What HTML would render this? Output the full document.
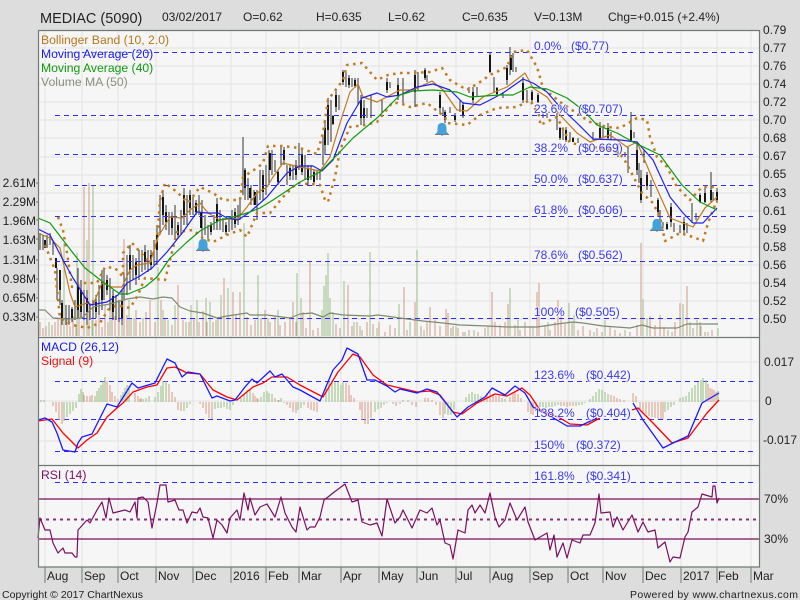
<!DOCTYPE html>
<html><head><meta charset="utf-8"><style>
html,body{margin:0;padding:0;background:#ddd;width:800px;height:600px;overflow:hidden}
svg{display:block}
text{font-family:"Liberation Sans",sans-serif;font-size:12px;fill:#222}
polyline{stroke-linejoin:round}
.f{fill:#3a3af0;stroke:#f6f6f6;stroke-width:2;stroke-opacity:.7;paint-order:stroke}
</style></head><body>
<svg width="800" height="600" viewBox="0 0 800 600" xmlns="http://www.w3.org/2000/svg">
<rect width="800" height="600" fill="#dddddd"/>
<rect x="38.5" y="30.5" width="721" height="536.5" fill="#f6f6f6"/>
<!-- grid -->
<path fill="none" stroke="#e6e6e6" stroke-width="1.3" d="M45 31V567M82 31V567M118 31V567M156 31V567M193 31V567M231 31V567M266 31V567M299 31V567M341 31V567M379 31V567M417 31V567M456 31V567M490 31V567M530 31V567M568 31V567M603 31V567M643 31V567M681 31V567M717 31V567M751 31V567"/>
<path fill="none" stroke="#e6e6e6" stroke-width="1.3" d="M39 48H759M39 66H759M39 84H759M39 102H759M39 120H759M39 138H759M39 157H759M39 175H759M39 193H759M39 211H759M39 229H759M39 247H759M39 265H759M39 283H759M39 301H759M39 319H759M39 362H759M39 401H759M39 441H759"/>
<!-- volume -->
<path fill="none" stroke="#cf9c88" stroke-width="1" d="M40 322V336M43 328V336M46 326V336M52 325V336M55 322V336M58 318V336M61 313V336M64 325V336M67 319V336M70 326V336M73 316V336M76 325V336M79 310V336M84 187V336M89 183V336M96 320V336M99 312V336M102 327V336M105 305V336M108 322V336M112 300V336M115 316V336M119 300V336M124 239V336M127 315V336M131 318V336M136 310V336M140 322V336M146 312V336M150 300V336M155 322V336M161 300V336M165 318V336M172 325V336M178 285V336M183 320V336M189 322V336M194 318V336M199 322V336M203 311V336M207 322V336M213 322V336M218 318V336M224 278V336M228 312V336M233 292V336M236 315V336M240 292V336M247 317V336M251 325V336M255 320V336M261 318V336M265 310V336M270 322V336M275 316V336M280 325V336M285 322V336M290 318V336M293 302V336M296 322V336M303 312V336M306 328V336M310 262V336M313 330V336M318 328V336M336 324V336M340 328V336M348 285V336M352 326V336M357 322V336M362 330V336M367 322V336M373 324V336M379 322V336M385 332V336M390 325V336M395 328V336M404 287V336M407 330V336M415 302V336M421 326V336M427 322V336M430 307V336M435 320V336M440 326V336M446 309V336M448 313V336M453 326V336M458 328V336M463 332V336M469 330V336M478 332V336M485 328V336M492 292V336M495 322V336M500 325V336M505 322V336M508 304V336M515 325V336M520 330V336M525 322V336M530 326V336M537 292V336M539 283V336M545 325V336M550 330V336M555 322V336M558 300V336M561 310V336M565 324V336M572 322V336M578 330V336M583 326V336M590 330V336M597 328V336M602 332V336M610 326V336M615 330V336M620 333V336M630 332V336M637 325V336M641 243V336M650 316V336M655 325V336M660 315V336M664 327V336M668 330V336M675 322V336M680 303V336M687 286V336M693 328V336M700 322V336M705 332V336M712 330V336"/>
<path fill="none" stroke="#9dbf8c" stroke-width="1" d="M49 322V336M64 243V336M77 253V336M87 240V336M93 185V336M92 320V336M110 308V336M122 318V336M129 300V336M134 318V336M143 318V336M158 267V336M163 310V336M168 320V336M175 305V336M186 322V336M191 305V336M197 300V336M206 298V336M210 302V336M216 320V336M221 295V336M228 288V336M244 223V336M258 275V336M268 318V336M278 310V336M297 273V336M301 298V336M324 286V336M326 275V336M328 253V336M330 298V336M322 310V336M333 312V336M344 281V336M354 322V336M360 326V336M370 252V336M377 328V336M399 304V336M417 250V336M410 322V336M424 330V336M451 328V336M456 326V336M465 332V336M474 330V336M488 326V336M510 288V336M518 320V336M533 326V336M548 322V336M569 303V336M574 315V336M594 332V336M605 320V336M625 330V336M643 299V336M647 318V336M672 332V336M683 304V336M690 322V336M697 320V336M701 326V336M708 332V336M718 328V336"/>
<!-- candles -->
<path fill="none" stroke="#444" stroke-width="1.1" d="M40 233V250M43 235V250M47 235V248M50 233V245M53 240V255M57 268V300M60 285V305M62 300V325M66 305V325M69 305V325M72 307V322M75 300V320M78 268V318M81 280V318M84 290V320M87 290V325M90 305V320M93 300V318M96 295V318M99 285V315M102 270V310M104 268V300M107 275V295M110 278V310M113 290V320M116 295V320M119 300V322M122 290V325M124 273V300M127 255V295M130 245V290M133 255V280M136 258V285M139 250V280M142 250V272M145 245V270M148 250V272M151 250V270M154 240V265M157 225V265M160 195V235M163 190V225M166 205V230M169 212V235M172 212V235M175 205V240M178 222V238M181 210V235M184 188V225M187 195V225M190 190V215M193 197V215M196 200V215M199 195V215M202 200V245M205 215V235M208 225V240M211 222V235M214 215V230M217 198V230M220 210V230M223 218V232M226 222V235M229 218V232M232 210V230M235 208V228M238 205V225M240 198V220M243 137V195M245 168V200M248 178V200M251 185V205M254 190V205M257 190V220M260 170V200M263 170V200M266 165V195M269 150V185M272 150V175M275 160V172M278 170V185M281 145V165M284 147V165M287 165V185M290 165V180M293 165V180M296 160V180M299 143V170M302 150V175M305 155V180M308 165V185M311 165V180M314 170V185M317 170V180M320 170V180M323 135V165M325 120V155M328 98V145M331 100V142M333 115V125M336 90V112M339 95V110M343 70V85M346 72V87M349 75V88M352 78V87M355 78V88M358 78V105M361 95V125M364 100V125M367 108V118M371 95V118M382 100V113M387 78V93M390 82V88M398 78V100M403 78V103M415 70V107M418 72V90M425 68V80M427 75V82M440 92V113M443 107V115M445 110V123M450 107V113M455 113V122M460 100V112M463 102V118M469 87V93M473 87V103M477 87V97M490 52V73M494 77V92M497 87V95M503 92V98M507 65V85M510 47V75M513 53V72M516 67V72M523 77V103M527 90V102M532 90V103M538 93V103M543 113V118M547 113V118M557 113V130M560 127V140M563 128V140M566 127V142M570 132V142M573 137V142M578 138V143M593 132V140M600 122V140M603 128V137M608 123V140M611 132V140M618 143V157M625 152V157M628 147V173M631 112V142M634 132V138M637 143V175M639 163V183M641 170V203M644 150V163M647 172V190M651 180V197M658 198V217M660 210V223M663 222V228M667 222V230M671 203V227M674 223V232M680 225V233M684 217V233M687 223V233M692 203V223M696 213V220M700 193V203M705 187V203M711 172V203M713 192V200M717 188V203"/>
<path fill="none" stroke="#000" stroke-width="1.8" d="M45 240V248M56 258V268M60 270V290M62 303V320M72 309V318M78 285V310M81 290V312M87 298V312M96 302V312M102 282V300M107 280V290M113 296V312M122 300V318M130 255V270M136 262V275M145 252V262M151 255V265M157 235V250M163 197V215M166 212V222M172 216V228M178 225V235M184 195V215M190 195V208M196 203V212M201 212V228M211 225V232M217 204V222M226 225V232M235 212V224M245 170V188M250 188V198M255 192V205M263 175V192M270 153V170M278 172V182M284 150V160M290 168V176M296 165V175M302 155V172M308 168V180M314 172V182M325 128V145M328 105V130M333 116V124M336 95V107M343 72V82M349 78V85M355 80V86M361 100V118M364 108V118M387 82V90M398 85V95M415 75V92M425 70V78M440 95V108M445 112V120M455 115V120M463 105V115M473 92V100M490 55V72M497 88V94M507 68V80M511 55V70M523 83V100M532 92V100M538 95V102M560 128V138M566 130V140M573 138V142M600 128V138M608 128V138M631 130V142M637 150V170M641 178V200M647 175V186M658 200V212M667 224V229M671 207V222M684 222V230M700 195V202M705 193V202M711 190V200M717 192V200"/>
<!-- dash lines -->
<path fill="none" stroke="#2c2cff" stroke-width="1" stroke-dasharray="5 4" d="M55 52.5H754M55 115.5H754M55 154.5H754M55 185.5H754M55 216.5H754M55 261.5H754M55 318.5H754M55 381.5H754M55 419.5H754M55 451.5H754M55 482.5H754"/>
<!-- volume MA -->
<polyline fill="none" stroke="#7f8a70" stroke-width="1.2" points="38,310 45,310 53,318 67,319 82,318 93,307 110,304 127,299 140,297 153,299 163,297 172,298 180,307 190,311 203,313 217,318 227,316 247,313 250,315 267,315 290,318 300,314 312,313 323,317 330,313 343,315 370,316 378,315 400,318 423,321 443,323 460,325 487,326 507,327 537,327 557,324 573,322 583,323 603,326 630,328 642,325 653,328 677,328 687,324 718,324"/>
<!-- BB dots -->
<polyline fill="none" stroke="#c07a20" stroke-width="2.5" stroke-dasharray="2.5 4.5" points="58,217 63,230 67,253 72,287 83,283 97,283 105,267 115,268 123,277 123,253 132,243 150,263 157,240 160,200 165,183 177,192 188,203 200,187 213,193 223,200 240,200 243,177 257,168 263,163 268,146 282,146 300,148 317,154 323,133 328,100 343,80 347,65 362,63 377,80 388,75 400,73 410,73 430,72 442,68 450,80 467,90 480,82 490,75 507,67 513,52 527,50 537,67 543,88 560,102 575,112 590,122 607,127 620,128 637,118 647,120 650,137 657,157 667,167 677,187 690,200 702,187 717,187"/>
<polyline fill="none" stroke="#c07a20" stroke-width="2.5" stroke-dasharray="2.5 4.5" points="45,245 55,270 60,318 73,325 87,328 100,323 108,310 117,305 130,308 138,295 145,278 165,280 168,268 177,232 193,230 203,238 213,242 227,235 240,230 247,237 257,213 270,213 283,197 297,183 320,185 325,200 328,202 335,177 340,150 350,127 365,125 377,122 392,103 400,103 410,107 427,103 445,117 447,123 467,125 480,115 497,108 517,107 530,100 540,117 540,125 557,117 570,143 593,147 613,150 623,157 630,170 642,193 653,203 660,217 665,241 680,233 693,237 703,241 708,223 717,200"/>
<!-- BB mid -->
<polyline fill="none" stroke="#c07a20" stroke-width="1.2" points="38,233 50,238 60,248 70,293 75,307 87,303 93,305 102,283 112,287 122,287 130,270 137,265 150,263 158,237 170,217 182,218 190,210 200,203 208,213 220,220 238,218 247,207 257,193 267,187 273,177 283,163 300,167 320,171 330,157 340,123 350,92 358,84 363,97 377,102 400,90 413,90 432,81 443,90 457,110 467,111 483,97 507,87 525,73 533,88 547,97 560,115 577,133 590,142 610,135 627,147 637,142 653,180 670,218 693,227 705,208 717,197"/>
<!-- MA20 -->
<polyline fill="none" stroke="#2020ee" stroke-width="1.2" points="38,229 50,235 63,260 73,278 90,305 107,302 118,295 127,283 140,276 152,268 167,252 183,232 197,212 207,213 218,213 227,218 238,220 250,212 267,197 287,173 300,166 313,166 322,171 333,160 347,123 362,98 377,93 387,97 400,95 417,87 433,84 450,90 463,103 480,105 490,100 503,93 523,79 533,83 547,92 560,107 577,123 593,139 620,140 637,142 653,160 670,197 683,213 693,223 703,223 717,208"/>
<!-- MA40 -->
<polyline fill="none" stroke="#109a10" stroke-width="1.2" points="38,218 50,223 63,240 73,253 85,268 103,282 120,294 128,294 145,287 157,277 170,258 187,242 200,231 220,220 237,216 250,212 260,208 273,200 300,182 320,172 337,155 353,138 377,118 400,95 413,91 433,90 457,92 470,97 500,95 513,95 530,87 547,89 567,98 583,110 597,125 617,133 633,142 660,155 682,185 700,202 717,210"/>
<!-- bells -->
<g transform="translate(203,245.5)"><path d="M-1-6.5H1Q4.5-6 4.5-1V2L6.5 4.5H-6.5L-4.5 2V-1Q-4.5-6-1-6.5Z" fill="#45a2d8"/><path d="M-7 5H7M0 5V6.5" stroke="#778" stroke-width="1"/></g>
<g transform="translate(442,129.5)"><path d="M-1-6.5H1Q4.5-6 4.5-1V2L6.5 4.5H-6.5L-4.5 2V-1Q-4.5-6-1-6.5Z" fill="#45a2d8"/><path d="M-7 5H7M0 5V6.5" stroke="#778" stroke-width="1"/></g>
<g transform="translate(657,225.5)"><path d="M-1-6.5H1Q4.5-6 4.5-1V2L6.5 4.5H-6.5L-4.5 2V-1Q-4.5-6-1-6.5Z" fill="#45a2d8"/><path d="M-7 5H7M0 5V6.5" stroke="#778" stroke-width="1"/></g>
<!-- MACD hist -->
<path fill="none" stroke="#9dc48a" stroke-width="1.1" d="M41 402V400M44 402V400M64 402V421M67 402V417M70 402V414M73 402V411M76 402V408M79 402V394M81 402V389M83 402V392M95 402V396M97 402V391M99 402V388M101 402V385M103 402V381M105 402V377M121 402V395M123 402V392M125 402V388M127 402V385M129 402V386M140 402V399M143 402V399M146 402V398M149 402V396M155 402V397M158 402V392M161 402V386M163 402V381M166 402V381M184 402V411M187 402V408M190 402V404M215 402V409M218 402V408M221 402V408M224 402V407M227 402V409M230 402V410M233 402V405M241 402V398M244 402V394M247 402V390M250 402V389M258 402V399M261 402V397M264 402V392M267 402V391M269 402V393M272 402V394M279 402V400M281 402V398M298 402V410M301 402V408M304 402V405M326 402V385M329 402V381M332 402V380M335 402V382M338 402V382M341 402V385M343 402V382M375 402V412M378 402V409M381 402V408M384 402V405M387 402V403M403 402V400M408 402V400M445 402V414M448 402V415M451 402V415M454 402V410M466 402V397M469 402V394M472 402V392M475 402V394M478 402V394M481 402V396M484 402V397M502 402V398M505 402V399M540 402V407M543 402V407M546 402V408M549 402V407M552 402V407M555 402V406M558 402V405M576 402V406M579 402V405M582 402V405M585 402V403M590 402V399M593 402V396M596 402V392M599 402V389M602 402V390M605 402V392M608 402V394M665 402V412M668 402V410M671 402V407M674 402V405M680 402V398M683 402V397M686 402V396M689 402V392M692 402V388M695 402V385M698 402V382M701 402V380M703 402V378M706 402V380M718 402V391"/>
<path fill="none" stroke="#dba18c" stroke-width="1.1" d="M53 402V406M56 402V412M59 402V420M62 402V424M84 402V395M87 402V396M90 402V396M92 402V395M107 402V381M110 402V385M112 402V392M115 402V396M118 402V399M135 402V393M138 402V396M141 402V398M169 402V384M172 402V392M175 402V397M178 402V410M181 402V411M200 402V404M203 402V408M206 402V414M209 402V418M212 402V419M253 402V393M255 402V396M257 402V398M275 402V398M278 402V400M284 402V403M287 402V405M290 402V408M293 402V412M296 402V413M308 402V408M311 402V410M314 402V411M317 402V412M346 402V383M349 402V385M351 402V395M354 402V398M360 402V410M362 402V420M365 402V424M368 402V424M371 402V418M393 402V404M396 402V406M400 402V404M412 402V405M416 402V407M425 402V398M428 402V398M432 402V400M436 402V405M440 402V415M443 402V418M487 402V393M490 402V392M493 402V394M496 402V396M499 402V396M510 402V397M513 402V394M515 402V392M518 402V394M521 402V398M528 402V412M531 402V414M533 402V415M536 402V412M561 402V406M564 402V406M567 402V407M570 402V406M573 402V406M611 402V395M614 402V396M617 402V398M620 402V399M624 402V400M633 402V393M636 402V396M640 402V410M643 402V412M646 402V414M649 402V416M652 402V417M655 402V418M658 402V419M661 402V419M663 402V419M708 402V384M710 402V388M712 402V389M714 402V390M716 402V392"/>
<!-- MACD lines -->
<polyline fill="none" stroke="#ff0000" stroke-width="1.3" points="38,421 52,419 63,433 78,448 87,440 97,433 107,417 117,408 123,403 133,392 147,387 157,385 167,368 175,367 187,373 200,374 213,390 227,397 237,400 253,387 263,383 272,377 287,377 300,385 323,397 338,372 353,354 360,357 373,375 387,385 400,388 417,392 430,391 440,395 453,412 462,414 477,403 495,394 507,396 522,388 530,395 540,410 560,418 570,424 587,425 600,418"/>
<polyline fill="none" stroke="#ff0000" stroke-width="1.3" points="632,410 638,408 653,423 672,443 688,438 707,413 719,400"/>
<polyline fill="none" stroke="#1a1aff" stroke-width="1.3" points="38,420 45,418 52,422 57,433 63,450 75,452 78,443 82,437 92,434 100,418 107,404 117,407 132,383 138,388 155,383 167,359 175,363 182,377 188,372 200,374 212,398 217,396 230,401 235,400 245,387 252,379 257,383 270,371 275,377 282,374 293,387 300,390 320,401 333,370 342,360 347,348 358,354 367,380 375,380 387,386 395,392 400,389 417,393 427,389 437,392 457,417 468,407 485,397 492,388 505,395 515,386 525,393 533,407 557,420 567,426 580,426 597,418"/>
<polyline fill="none" stroke="#1a1aff" stroke-width="1.3" points="633,403 643,420 663,448 673,443 688,436 702,403 719,393"/>
<!-- RSI lines -->
<path fill="none" stroke="#7a1060" stroke-width="1.2" d="M39 499H759M39 539H759"/>
<path fill="none" stroke="#8a3080" stroke-width="2" stroke-dasharray="3 4" d="M39 519.5H759"/>
<polyline fill="none" stroke="#7a1060" stroke-width="1.2" points="38,538 40,518 45,530 50,530 53,543 58,553 63,548 65,553 72,553 75,557 77,557 78,530 87,520 90,523 97,510 102,502 106,518 109,498 113,513 125,510 130,512 135,502 137,518 138,498 143,497 148,502 152,528 157,503 160,485 166,485 168,502 175,500 179,510 183,510 187,523 192,512 197,513 200,508 203,517 208,518 213,538 217,520 222,525 227,533 230,518 237,510 240,520 244,493 248,510 250,498 255,515 260,507 267,504 275,517 281,497 285,513 292,527 296,532 300,507 307,530 310,527 315,527 320,517 324,500 328,497 333,493 345,484 352,502 358,500 362,522 370,525 377,523 382,536 387,499 395,523 400,517 403,510 412,528 420,510 427,513 432,508 437,525 440,520 445,543 450,545 453,559 458,530 465,533 468,510 472,505 475,513 480,505 485,513 490,493 495,517 499,527 505,520 510,503 517,520 525,507 528,522 535,540 547,533 550,550 554,535 557,557 563,543 567,558 572,540 580,543 583,535 590,535 595,523 599,494 601,513 610,512 613,527 617,517 623,530 632,515 638,532 643,522 648,532 655,530 658,548 665,542 670,562 673,557 680,558 685,537 688,532 692,512 698,507 702,494 712,497 713,486 715,486 717,503 719,498"/>
<!-- frame -->
<path fill="none" stroke="#6f7a70" stroke-width="1.2" d="M38.5 30.5H759.5V567H38.5ZM38.5 337.5H759.5M38.5 465.5H759.5"/>
<path fill="none" stroke="#6f7a70" stroke-width="1" d="M45 567V583M82 567V583M118 567V583M156 567V583M193 567V583M231 567V583M266 567V583M299 567V583M341 567V583M379 567V583M417 567V583M456 567V583M490 567V583M530 567V583M568 567V583M603 567V583M643 567V583M681 567V583M717 567V583M751 567V583M36 183H38M36 202H38M36 220H38M36 239H38M36 260H38M36 279H38M36 298H38M36 317H38"/>
<!-- header -->
<text x="40" y="23" style="font-size:14.5px">MEDIAC (5090)</text>
<text x="162" y="21">03/02/2017</text><text x="243" y="21">O=0.62</text><text x="316" y="21">H=0.635</text><text x="388" y="21">L=0.62</text><text x="462" y="21">C=0.635</text><text x="534" y="21">V=0.13M</text><text x="608" y="21">Chg=+0.015 (+2.4%)</text>
<!-- legend -->
<text x="41" y="44" style="fill:#b8761a;font-size:12.2px">Bollinger Band (10, 2.0)</text>
<text x="41" y="58" style="fill:#1a1aee;stroke:#f6f6f6;stroke-width:2;stroke-opacity:.6;paint-order:stroke;font-size:12.2px">Moving Average (20)</text>
<text x="41" y="72" style="fill:#109a10;font-size:12.2px">Moving Average (40)</text>
<text x="41" y="86" style="fill:#8a8f80;font-size:12.2px">Volume MA (50)</text>
<text x="41" y="351" style="fill:#1a1aee;font-size:12.2px">MACD (26,12)</text>
<text x="41" y="365" style="fill:#ee1010;font-size:12.2px">Signal (9)</text>
<text x="41" y="479" style="fill:#7a1060;font-size:12.2px">RSI (14)</text>
<!-- fib -->
<text class="f" x="534" y="50">0.0%</text><text class="f" x="571" y="50">($0.77)</text>
<text class="f" x="534" y="113">23.6%</text><text class="f" x="578" y="113">($0.707)</text>
<text class="f" x="534" y="152">38.2%</text><text class="f" x="578" y="152">($0.669)</text>
<text class="f" x="534" y="183">50.0%</text><text class="f" x="578" y="183">($0.637)</text>
<text class="f" x="534" y="214">61.8%</text><text class="f" x="578" y="214">($0.606)</text>
<text class="f" x="534" y="259">78.6%</text><text class="f" x="578" y="259">($0.562)</text>
<text class="f" x="534" y="316">100%</text><text class="f" x="575" y="316">($0.505)</text>
<text class="f" x="534" y="379">123.6%</text><text class="f" x="586" y="379">($0.442)</text>
<text class="f" x="534" y="417">138.2%</text><text class="f" x="586" y="417">($0.404)</text>
<text class="f" x="534" y="449">150%</text><text class="f" x="576" y="449">($0.372)</text>
<text class="f" x="534" y="480">161.8%</text><text class="f" x="586" y="480">($0.341)</text>
<!-- right axis -->
<text x="763" y="34">0.79</text><text x="763" y="52">0.77</text><text x="763" y="70">0.76</text><text x="763" y="88">0.74</text><text x="763" y="106">0.72</text><text x="763" y="124">0.70</text><text x="763" y="142">0.68</text><text x="763" y="160">0.67</text><text x="763" y="178">0.65</text><text x="763" y="197">0.63</text><text x="763" y="215">0.61</text><text x="763" y="233">0.59</text><text x="763" y="251">0.58</text><text x="763" y="269">0.56</text><text x="763" y="287">0.54</text><text x="763" y="305">0.52</text><text x="763" y="323">0.50</text>
<text x="764" y="366">0.017</text><text x="765" y="405">0</text><text x="763" y="444">-0.017</text>
<text x="764" y="503">70%</text><text x="764" y="543">30%</text>
<!-- left axis -->
<g text-anchor="end"><text x="36" y="187">2.61M</text><text x="36" y="206">2.29M</text><text x="36" y="225">1.96M</text><text x="36" y="244">1.63M</text><text x="36" y="264">1.31M</text><text x="36" y="283">0.98M</text><text x="36" y="302">0.65M</text><text x="36" y="321">0.33M</text></g>
<!-- months -->
<text x="47" y="580">Aug</text><text x="84" y="580">Sep</text><text x="120" y="580">Oct</text><text x="158" y="580">Nov</text><text x="195" y="580">Dec</text><text x="233" y="580">2016</text><text x="268" y="580">Feb</text><text x="301" y="580">Mar</text><text x="343" y="580">Apr</text><text x="381" y="580">May</text><text x="419" y="580">Jun</text><text x="457" y="580">Jul</text><text x="492" y="580">Aug</text><text x="532" y="580">Sep</text><text x="570" y="580">Oct</text><text x="605" y="580">Nov</text><text x="645" y="580">Dec</text><text x="683" y="580">2017</text><text x="718" y="580">Feb</text><text x="753" y="580">Mar</text>
<!-- footer -->
<text x="2" y="598" textLength="141" lengthAdjust="spacing" style="font-size:10.5px">Copyright © 2017 ChartNexus</text>
<text x="630" y="598" textLength="168" lengthAdjust="spacing" style="font-size:10.5px">Powered by www.chartnexus.com</text>
</svg>
</body></html>
